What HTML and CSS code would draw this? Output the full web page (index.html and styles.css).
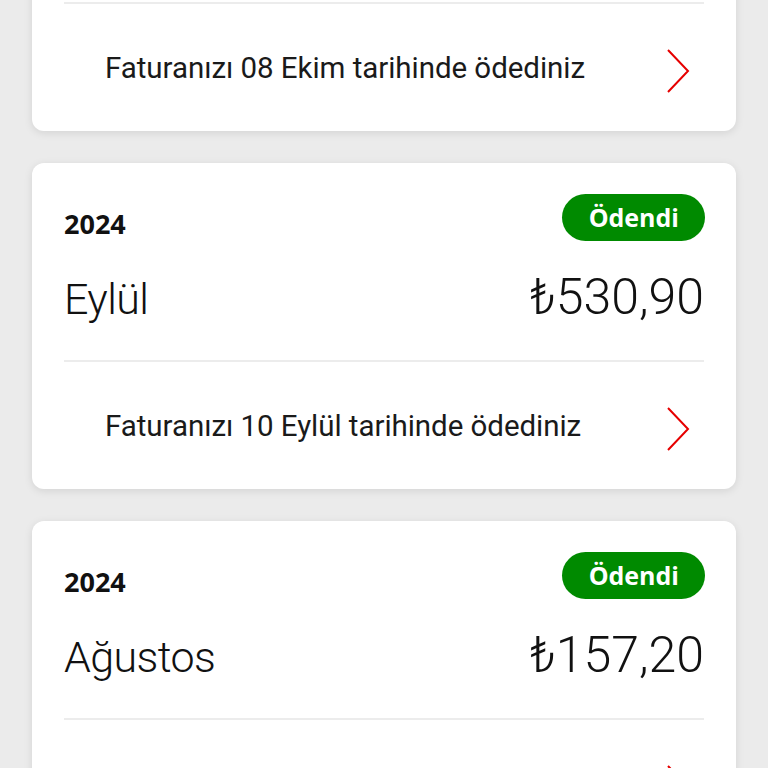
FILE: index.html
```html
<!DOCTYPE html>
<html lang="tr">
<head>
<meta charset="utf-8">
<title>Faturalar</title>
<link rel="stylesheet" href="styles.css">
</head>
<body>
<main class="list">
  <section class="card card-first">
    <div class="head">
      <div class="row-top">
        <span class="year">2024</span>
        <span class="badge">Ödendi</span>
      </div>
      <div class="row-main">
        <span class="month">Ekim</span>
        <span class="amount">₺530,90</span>
      </div>
    </div>
    <a class="foot" href="#">
      <span class="foot-text">Faturanızı 08 Ekim tarihinde ödediniz</span>
      <svg class="chev" viewBox="0 0 24 44" width="24" height="44"><path d="M2 1 L22 22 L2 43" fill="none" stroke="#e60000" stroke-width="2"/></svg>
    </a>
  </section>

  <section class="card">
    <div class="head">
      <div class="row-top">
        <span class="year">2024</span>
        <span class="badge">Ödendi</span>
      </div>
      <div class="row-main">
        <span class="month">Eylül</span>
        <span class="amount">₺530,90</span>
      </div>
    </div>
    <a class="foot" href="#">
      <span class="foot-text">Faturanızı 10 Eylül tarihinde ödediniz</span>
      <svg class="chev" viewBox="0 0 24 44" width="24" height="44"><path d="M2 1 L22 22 L2 43" fill="none" stroke="#e60000" stroke-width="2"/></svg>
    </a>
  </section>

  <section class="card">
    <div class="head">
      <div class="row-top">
        <span class="year">2024</span>
        <span class="badge">Ödendi</span>
      </div>
      <div class="row-main">
        <span class="month">Ağustos</span>
        <span class="amount">₺157,20</span>
      </div>
    </div>
    <a class="foot" href="#">
      <span class="foot-text">Faturanızı 10 Ağustos tarihinde ödediniz</span>
      <svg class="chev" viewBox="0 0 24 44" width="24" height="44"><path d="M2 1 L22 22 L2 43" fill="none" stroke="#e60000" stroke-width="2"/></svg>
    </a>
  </section>
</main>
</body>
</html>
```

FILE: styles.css
```css
html, body {
  margin: 0;
  padding: 0;
}
body {
  background: #ebebeb;
  font-family: Roboto, "Noto Sans", sans-serif;
  color: #111;
  overflow: hidden;
}
.list {
  display: flex;
  flex-direction: column;
  gap: 32px;
  padding: 0 32px;
}
.card {
  background: #fff;
  border-radius: 12px;
  box-shadow: 0 2px 8px rgba(0, 0, 0, 0.10);
  padding: 0 32px;
}
.card-first {
  margin-top: -195px;
}
.head {
  padding-top: 31px;
  height: 199px;
  box-sizing: border-box;
  border-bottom: 2px solid #ececec;
}
.row-top {
  display: flex;
  justify-content: space-between;
  align-items: flex-end;
}
.year {
  font-family: "Open Sans", sans-serif;
  font-weight: 700;
  font-size: 27px;
  line-height: 30px;
  margin-bottom: 2px;
}
.badge {
  background: #008a00;
  color: #fff;
  font-family: "Open Sans", sans-serif;
  font-weight: 700;
  font-size: 25px;
  line-height: 47px;
  height: 47px;
  padding: 0 26px 0 27px;
  border-radius: 24px;
  margin-right: -1px;
}
.row-main {
  display: flex;
  justify-content: space-between;
  align-items: baseline;
  margin-top: 30px;
}
.month {
  font-weight: 300;
  font-size: 43px;
  letter-spacing: -0.6px;
  line-height: 52px;
}
.amount {
  font-weight: 300;
  font-size: 50px;
  line-height: 52px;
}
.foot {
  display: flex;
  align-items: center;
  justify-content: space-between;
  height: 127px;
  padding: 0 14px 0 41px;
  text-decoration: none;
  color: #1a1a1a;
}
.foot-text {
  font-size: 29.5px;
  letter-spacing: -0.05px;
}
.chev {
  display: block;
  margin-top: 6px;
}
```
